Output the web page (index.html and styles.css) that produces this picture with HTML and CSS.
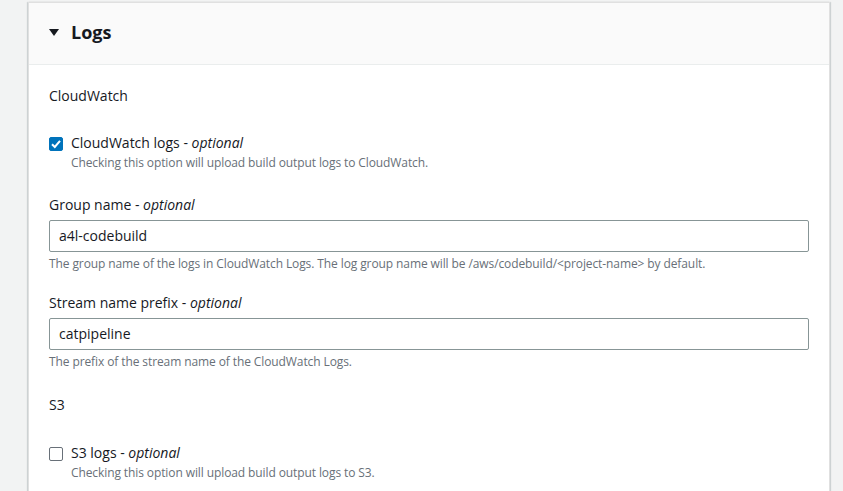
FILE: index.html
```html
<!DOCTYPE html>
<html>
<head>
<meta charset="utf-8">
<link rel="stylesheet" href="styles.css">
</head>
<body>
<div class="page">
  <section class="card">
    <header class="card-header">
      <svg class="caret" width="10" height="8" viewBox="0 0 10 8"><path d="M0 0 H10 L5 7 Z" fill="#16191f"/></svg>
      <h2 class="title">Logs</h2>
    </header>
    <div class="card-body">
      <div class="section-title">CloudWatch</div>
      <div class="check-row">
        <span class="checkbox checked">
          <svg width="14" height="14" viewBox="0 0 14 14"><path d="M3 7.2 L5.8 10 L11 3.8" fill="none" stroke="#fff" stroke-width="2"/></svg>
        </span>
        <div class="check-text">
          <div class="check-label">CloudWatch logs - <i>optional</i></div>
          <div class="desc">Checking this option will upload build output logs to CloudWatch.</div>
        </div>
      </div>
      <div class="field first-field">
        <div class="field-label">Group name - <i>optional</i></div>
        <div class="input">a4l-codebuild</div>
        <div class="hint">The group name of the logs in CloudWatch Logs. The log group name will be /aws/codebuild/&lt;project-name&gt; by default.</div>
      </div>
      <div class="field">
        <div class="field-label">Stream name prefix - <i>optional</i></div>
        <div class="input">catpipeline</div>
        <div class="hint">The prefix of the stream name of the CloudWatch Logs.</div>
      </div>
      <div class="section-title s3">S3</div>
      <div class="check-row s3-row">
        <span class="checkbox"></span>
        <div class="check-text">
          <div class="check-label">S3 logs - <i>optional</i></div>
          <div class="desc">Checking this option will upload build output logs to S3.</div>
        </div>
      </div>
    </div>
  </section>
</div>
</body>
</html>
```
FILE: styles.css
```css
html, body {
  margin: 0;
  padding: 0;
  background: #f2f3f3;
  font-family: "Open Sans", "Noto Sans", sans-serif;
  color: #16191f;
}
.page {
  padding: 2px 13px 0 28px;
  height: 489px;
  overflow: hidden;
}
.card {
  background: #fff;
  border: 1px solid #e0e0e0;
  box-shadow: 0 1px 1px rgba(0,28,36,0.2), -1px 0 1px rgba(0,28,36,0.12), 1px 0 1px rgba(0,28,36,0.12);
  height: 600px;
}
.card-header {
  background: #fafafa;
  border-bottom: 1px solid #eaeded;
  height: 62px;
  box-sizing: border-box;
  display: flex;
  align-items: flex-start;
  padding: 18px 0 0 20px;
}
.caret {
  margin-right: 12px;
  margin-top: 8px;
}
.title {
  margin: 0;
  font-size: 18px;
  font-weight: 700;
  line-height: 22px;
}
.card-body {
  padding: 20px 20px 0 20px;
}
.section-title {
  font-size: 14px;
  line-height: 22px;
}
.section-title.s3 {
  margin-top: 24px;
}
.check-row {
  display: flex;
  margin-top: 26px;
}
.check-row.s3-row {
  margin-top: 27px;
}
.checkbox {
  width: 14px;
  height: 14px;
  box-sizing: border-box;
  border: 1.5px solid #687078;
  border-radius: 2px;
  margin-top: 4px;
  margin-right: 8px;
  flex: none;
  display: flex;
}
.checkbox.checked {
  background: #0073bb;
  border-color: #0073bb;
}
.checkbox.checked svg {
  margin: -1.5px;
}
.check-label {
  font-size: 14px;
  line-height: 20px;
}
.desc, .hint {
  font-size: 12px;
  line-height: 16px;
  color: #687078;
  letter-spacing: -0.1px;
}
.desc {
  margin-top: 2px;
}
.field {
  margin-top: 20px;
}
.first-field {
  margin-top: 23px;
}
.field-label {
  font-size: 14px;
  line-height: 22px;
}
.input {
  margin-top: 4px;
  height: 32px;
  box-sizing: border-box;
  border: 1px solid #879596;
  border-radius: 2px;
  padding: 0 9px;
  font-size: 14px;
  line-height: 30px;
}
.hint {
  margin-top: 4px;
}
```
